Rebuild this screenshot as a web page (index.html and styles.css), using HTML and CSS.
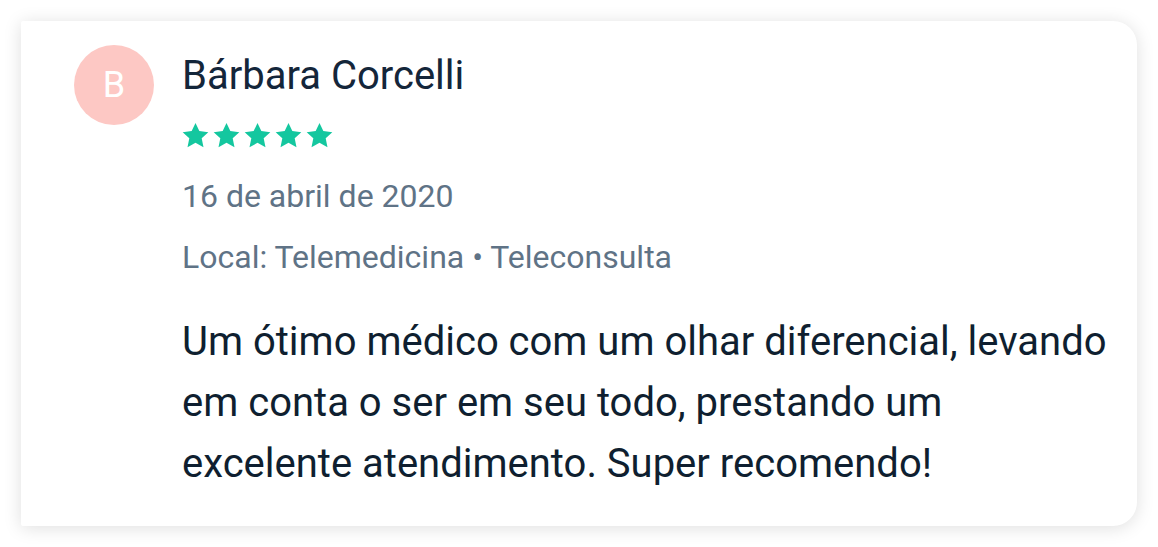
FILE: index.html
```html
<!DOCTYPE html>
<html lang="pt-BR">
<head>
<meta charset="utf-8">
<title>Avaliação</title>
<link rel="stylesheet" href="styles.css">
</head>
<body>
<div class="page">
  <article class="review-card">
    <div class="avatar">B</div>
    <div class="review-content">
      <h2 class="reviewer-name">Bárbara Corcelli</h2>
      <div class="stars" aria-label="5 estrelas">
        <svg class="star" viewBox="0 0 24 24"><path d="M12 .8l3.4 7.3 8 .9-5.9 5.5 1.6 7.9L12 18.5l-7.1 3.9 1.6-7.9L.6 9l8-.9z"/></svg>
        <svg class="star" viewBox="0 0 24 24"><path d="M12 .8l3.4 7.3 8 .9-5.9 5.5 1.6 7.9L12 18.5l-7.1 3.9 1.6-7.9L.6 9l8-.9z"/></svg>
        <svg class="star" viewBox="0 0 24 24"><path d="M12 .8l3.4 7.3 8 .9-5.9 5.5 1.6 7.9L12 18.5l-7.1 3.9 1.6-7.9L.6 9l8-.9z"/></svg>
        <svg class="star" viewBox="0 0 24 24"><path d="M12 .8l3.4 7.3 8 .9-5.9 5.5 1.6 7.9L12 18.5l-7.1 3.9 1.6-7.9L.6 9l8-.9z"/></svg>
        <svg class="star" viewBox="0 0 24 24"><path d="M12 .8l3.4 7.3 8 .9-5.9 5.5 1.6 7.9L12 18.5l-7.1 3.9 1.6-7.9L.6 9l8-.9z"/></svg>
      </div>
      <p class="meta date">16 de abril de 2020</p>
      <p class="meta place">Local: Telemedicina • Teleconsulta</p>
      <p class="review-text">Um ótimo médico com um olhar diferencial, levando em conta o ser em seu todo, prestando um excelente atendimento. Super recomendo!</p>
    </div>
  </article>
</div>
</body>
</html>
```
FILE: styles.css
```css
* { box-sizing: border-box; }
html, body { margin: 0; padding: 0; }
body {
  background: #ffffff;
  font-family: Roboto, "Noto Sans", Arial, sans-serif;
  width: 1158px;
  height: 547px;
  overflow: hidden;
}
.page {
  padding: 21px;
}
.review-card {
  width: 1116px;
  height: 505px;
  background: #ffffff;
  border-radius: 2px 24px 24px 2px;
  box-shadow: 0 2px 18px rgba(0, 0, 0, 0.13);
  display: flex;
  align-items: flex-start;
  padding: 24px 20px 0 53px;
}
.avatar {
  flex: 0 0 80px;
  width: 80px;
  height: 80px;
  border-radius: 50%;
  background: #fdc8c4;
  color: #ffffff;
  font-size: 36px;
  display: flex;
  align-items: center;
  justify-content: center;
  line-height: 1;
}
.review-content {
  margin-left: 28px;
  padding-top: 8px;
  display: flex;
  flex-direction: column;
}
.reviewer-name {
  margin: 0;
  font-weight: 400;
  font-size: 40px;
  line-height: 46px;
  color: #14263a;
}
.stars {
  display: flex;
  gap: 4px;
  margin-top: 23px;
  height: 27px;
}
.star {
  width: 27px;
  height: 27px;
  fill: #14c79f;
}
.meta {
  margin: 0;
  font-size: 32px;
  line-height: 40px;
  color: #5f7386;
}
.date { margin-top: 27px; }
.place { margin-top: 21px; }
.review-text {
  margin: 34px 0 0;
  font-size: 40px;
  line-height: 61px;
  color: #0f1f30;
  width: 930px;
}
```
